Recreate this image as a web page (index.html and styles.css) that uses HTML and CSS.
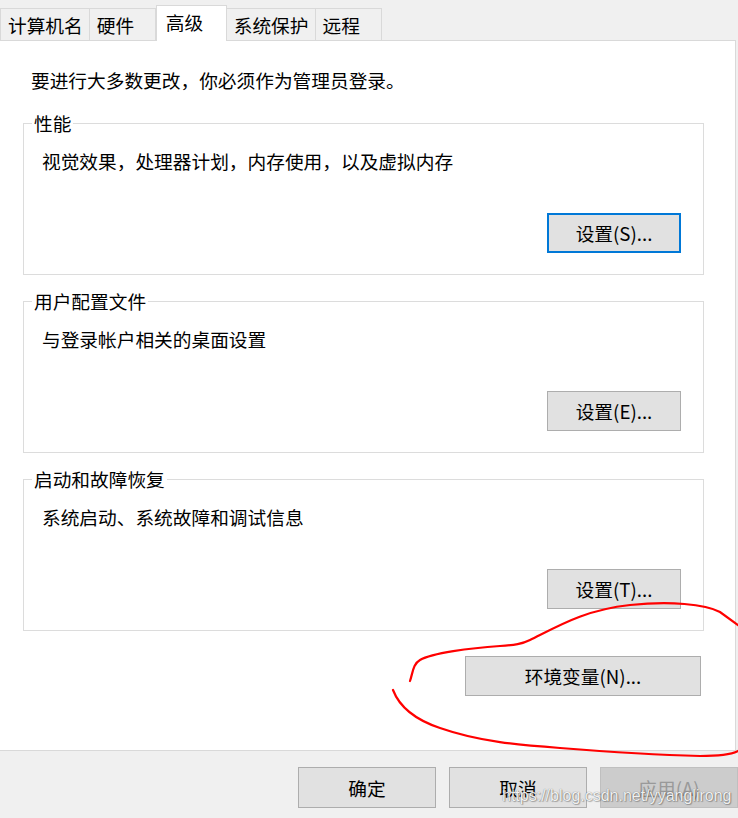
FILE: index.html
```html
<!DOCTYPE html>
<html lang="zh-CN">
<head>
<meta charset="utf-8">
<title>系统属性 - 高级</title>
<link rel="stylesheet" href="styles.css">
</head>
<body>
<div class="dialog">
  <div class="tabs">
    <div class="tab">计算机名</div>
    <div class="tab">硬件</div>
    <div class="tab active">高级</div>
    <div class="tab">系统保护</div>
    <div class="tab">远程</div>
  </div>
  <div class="panel">
    <p class="intro">要进行大多数更改，你必须作为管理员登录。</p>
    <div class="group">
      <div class="legend">性能</div>
      <p class="desc">视觉效果，处理器计划，内存使用，以及虚拟内存</p>
      <div class="group-actions"><button class="btn btn-set btn-default">设置(S)...</button></div>
    </div>
    <div class="group">
      <div class="legend">用户配置文件</div>
      <p class="desc">与登录帐户相关的桌面设置</p>
      <div class="group-actions"><button class="btn btn-set">设置(E)...</button></div>
    </div>
    <div class="group">
      <div class="legend">启动和故障恢复</div>
      <p class="desc">系统启动、系统故障和调试信息</p>
      <div class="group-actions"><button class="btn btn-set">设置(T)...</button></div>
    </div>
    <div class="env-row"><button class="btn btn-env">环境变量(N)...</button></div>
  </div>
  <div class="footer">
    <button class="btn btn-footer">确定</button>
    <button class="btn btn-footer">取消</button>
    <button class="btn btn-footer btn-disabled">应用(A)</button>
  </div>
  <div class="watermark">https://blog.csdn.net/yyanglirong</div>
  <svg class="annotation" width="738" height="818" viewBox="0 0 738 818">
    <path d="M410,681 C413,672 413,664 420,660 C432,653 470,648 500,646 C515,645 522,644 530,640 C560,625 585,610 630,605 C670,601 705,604 720,612 L738,625" />
    <path d="M393,690 C398,703 410,718 440,728 C480,742 520,745 560,748 C610,752 660,755 700,756 C720,756 732,754 738,751" />
  </svg>
</div>
</body>
</html>
```
FILE: styles.css
```css
html, body {
  margin: 0;
  padding: 0;
}
body {
  background: #f0f0f0;
  font-family: "Noto Sans CJK SC", "Noto Sans", sans-serif;
  font-size: 18.7px;
  color: #000;
  overflow: hidden;
}
.dialog {
  position: relative;
  width: 738px;
  height: 818px;
  overflow: hidden;
}
.tabs {
  display: flex;
  align-items: flex-end;
  height: 40px;
}
.tab {
  box-sizing: border-box;
  height: 32px;
  min-width: 67px;
  padding: 0 6px 0 7px;
  border: 1px solid #d9d9d9;
  border-bottom: 0;
  margin-right: -1px;
  background: #f0f0f0;
  line-height: 32px;
  white-space: nowrap;
}
.tab.active {
  position: relative;
  z-index: 1;
  height: 36px;
  min-width: 71px;
  padding: 0 9px;
  margin-left: 1px;
  margin-bottom: -1px;
  background: #fff;
  line-height: 32px;
}
.panel {
  box-sizing: border-box;
  width: 737px;
  height: 711px;
  margin-left: -1px;
  padding-top: 29px;
  background: #fff;
  border: 1px solid #d9d9d9;
}
.intro {
  margin: 0 0 33px 31px;
  line-height: 20px;
}
.group {
  box-sizing: border-box;
  display: flex;
  flex-direction: column;
  width: 681px;
  height: 152px;
  margin-left: 23px;
  border: 1px solid #dcdcdc;
}
.group + .group {
  margin-top: 26px;
}
.legend {
  align-self: flex-start;
  margin: -11px 0 0 8px;
  padding: 0 2px;
  background: #fff;
  line-height: 20px;
}
.desc {
  margin: 18px 0 0 18px;
  line-height: 20px;
}
.group-actions {
  display: flex;
  justify-content: flex-end;
  margin-top: 42px;
  padding-right: 22px;
}
.btn {
  box-sizing: border-box;
  height: 40px;
  padding: 0;
  font: inherit;
  line-height: 36px;
  color: #000;
  background: #e1e1e1;
  border: 1px solid #adadad;
  text-align: center;
}
.btn-set {
  width: 134px;
}
.btn-default {
  border: 2px solid #0078d7;
}
.env-row {
  display: flex;
  justify-content: flex-end;
  width: 681px;
  margin: 25px 0 0 23px;
  padding-right: 3px;
  box-sizing: border-box;
}
.btn-env {
  width: 236px;
}
.footer {
  display: flex;
  justify-content: flex-end;
  gap: 13px;
  padding-top: 16px;
}
.btn-footer {
  width: 138px;
  height: 41px;
  line-height: 37px;
}
.btn-disabled {
  background: #cccccc;
  border-color: #bfbfbf;
  color: #999999;
}
.watermark {
  position: absolute;
  left: 502px;
  top: 786px;
  font-family: "Liberation Sans", Arial, sans-serif;
  font-size: 16px;
  line-height: 20px;
  color: rgba(255, 255, 255, 0.92);
  text-shadow: 0 0 1px rgba(0, 0, 0, 0.55), 1px 1px 1px rgba(0, 0, 0, 0.25);
  white-space: nowrap;
}
.annotation {
  position: absolute;
  left: 0;
  top: 0;
  pointer-events: none;
}
.annotation path {
  fill: none;
  stroke: #ff0000;
  stroke-width: 2.2;
  stroke-linecap: round;
}
```
